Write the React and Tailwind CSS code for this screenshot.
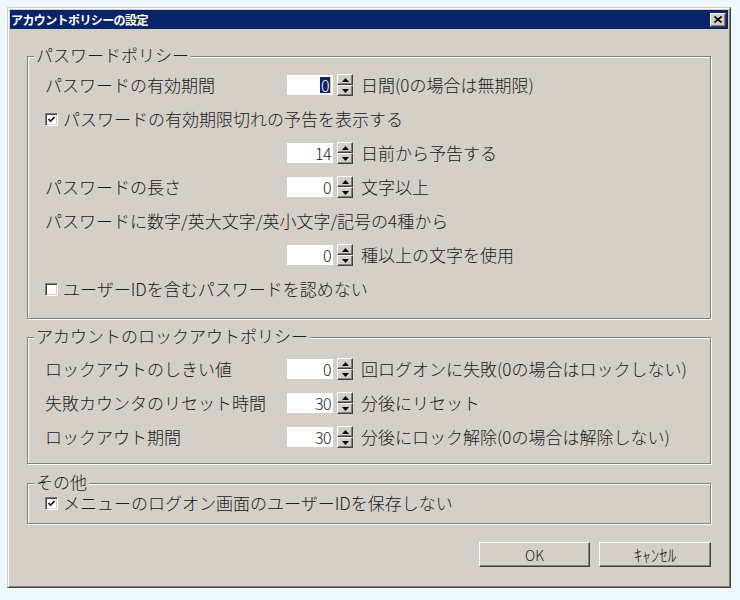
import React from 'react';

// Classic Windows-style account policy dialog

const Arrow = ({ up }) => (
  <svg width="7" height="4" viewBox="0 0 7 4" className="block">
    {up ? <polygon points="3.5,0 7,4 0,4" fill="#000" /> : <polygon points="0,0 7,0 3.5,4" fill="#000" />}
  </svg>
);

const SpinButton = ({ up }) => (
  <div className="w-[16px] h-[11px] bg-[#d4d0c8] border border-t-white border-l-white border-r-[#404040] border-b-[#404040] shadow-[inset_-1px_-1px_0_#808080] flex items-center justify-center">
    <Arrow up={up} />
  </div>
);

const Spinner = ({ value, focused = false }) => (
  <div className="flex items-center">
    <div className="w-[46px] h-[20px] bg-white flex items-center justify-end pr-[2px] text-[16px] leading-none tracking-[-0.5px]">
      {focused ? (
        <span className="bg-[#0a246a] text-white px-[1px] border-r border-[#e0c060]">{value}</span>
      ) : (
        <span>{value}</span>
      )}
    </div>
    <div className="ml-[4px] flex flex-col">
      <SpinButton up />
      <SpinButton />
    </div>
  </div>
);

const Checkbox = ({ checked }) => (
  <div className="w-[13px] h-[13px] bg-white border border-t-[#808080] border-l-[#808080] border-r-white border-b-white shadow-[inset_1px_1px_0_#404040,inset_-1px_-1px_0_#d4d0c8] flex items-center justify-center shrink-0">
    {checked && (
      <svg width="7" height="7" viewBox="0 0 7 7">
        <polyline points="0.5,3 2.5,5.2 6.5,1" fill="none" stroke="#000" strokeWidth="1.6" />
      </svg>
    )}
  </div>
);

const Group = ({ title, className, children }) => (
  <div className={`relative border border-[#808080] shadow-[1px_1px_0_#fff,inset_1px_1px_0_#fff] ${className}`}>
    <span className="absolute left-[6px] -top-[12px] px-[2px] bg-[#d4d0c8] leading-[20px]">{title}</span>
    {children}
  </div>
);

const SpinRow = ({ label, value, suffix, focused }) => (
  <div className="h-[34px] flex items-center">
    <div className="w-[242px]">{label}</div>
    <Spinner value={value} focused={focused} />
    <span className="ml-[8px]">{suffix}</span>
  </div>
);

const CheckRow = ({ checked, label, h = 'h-[34px]' }) => (
  <div className={`${h} flex items-center gap-[5px]`}>
    <Checkbox checked={checked} />
    <span>{label}</span>
  </div>
);

const Button = ({ children, w, size = 'text-[14px]' }) => (
  <button className={`${w} h-[25px] bg-[#d4d0c8] border border-t-white border-l-white border-r-[#404040] border-b-[#404040] shadow-[inset_-1px_-1px_0_#808080] ${size} leading-none flex items-center justify-center`}>
    {children}
  </button>
);

export default function App() {
  return (
    <div className="min-h-screen bg-[#f0f8ff] pt-[7px] pl-[7px] font-['Noto_Sans_CJK_JP',sans-serif] text-[#1a1a1a]">
      <div className="w-[724px] h-[581px] bg-[#d4d0c8] border border-t-[#d4d0c8] border-l-[#d4d0c8] border-r-[#404040] border-b-[#404040] shadow-[inset_1px_1px_0_#fff,inset_-1px_-1px_0_#808080] p-[2px] flex flex-col">
        {/* タイトルバー */}
        <div className="h-[19px] bg-[#0a246a] flex items-center justify-between pl-[1px] pr-[2px]">
          <span className="text-white text-[12px] font-bold tracking-[-0.6px] leading-none">アカウントポリシーの設定</span>
          <div className="w-[16px] h-[14px] bg-[#d4d0c8] border border-t-white border-l-white border-r-[#404040] border-b-[#404040] shadow-[inset_-1px_-1px_0_#808080] flex items-center justify-center">
            <svg width="8" height="7" viewBox="0 0 8 7">
              <path d="M0.5 0.5 L7.5 6.5 M7.5 0.5 L0.5 6.5" stroke="#000" strokeWidth="1.6" />
            </svg>
          </div>
        </div>

        <div className="flex-1 px-[17px] pt-[27px] text-[17px] font-light">
          <Group title="パスワードポリシー" className="h-[263px] pt-[11px] pl-[17px]">
            <SpinRow label="パスワードの有効期間" value="0" suffix="日間(0の場合は無期限)" focused />
            <CheckRow checked label="パスワードの有効期限切れの予告を表示する" />
            <SpinRow label="" value="14" suffix="日前から予告する" />
            <SpinRow label="パスワードの長さ" value="0" suffix="文字以上" />
            <div className="h-[34px] flex items-center">パスワードに数字/英大文字/英小文字/記号の4種から</div>
            <SpinRow label="" value="0" suffix="種以上の文字を使用" />
            <CheckRow checked={false} label="ユーザーIDを含むパスワードを認めない" />
          </Group>

          <Group title="アカウントのロックアウトポリシー" className="mt-[18px] h-[127px] pt-[14px] pl-[17px]">
            <SpinRow label="ロックアウトのしきい値" value="0" suffix="回ログオンに失敗(0の場合はロックしない)" />
            <SpinRow label="失敗カウンタのリセット時間" value="30" suffix="分後にリセット" />
            <SpinRow label="ロックアウト期間" value="30" suffix="分後にロック解除(0の場合は解除しない)" />
          </Group>

          <Group title="その他" className="mt-[19px] h-[41px] pt-[6px] pl-[17px]">
            <CheckRow checked label="メニューのログオン画面のユーザーIDを保存しない" h="h-[26px]" />
          </Group>

          <div className="mt-[18px] flex justify-end gap-[9px]">
            <Button w="w-[111px]">OK</Button>
            <Button w="w-[112px]" size="text-[17px]">ｷｬﾝｾﾙ</Button>
          </div>
        </div>
      </div>
    </div>
  );
}
